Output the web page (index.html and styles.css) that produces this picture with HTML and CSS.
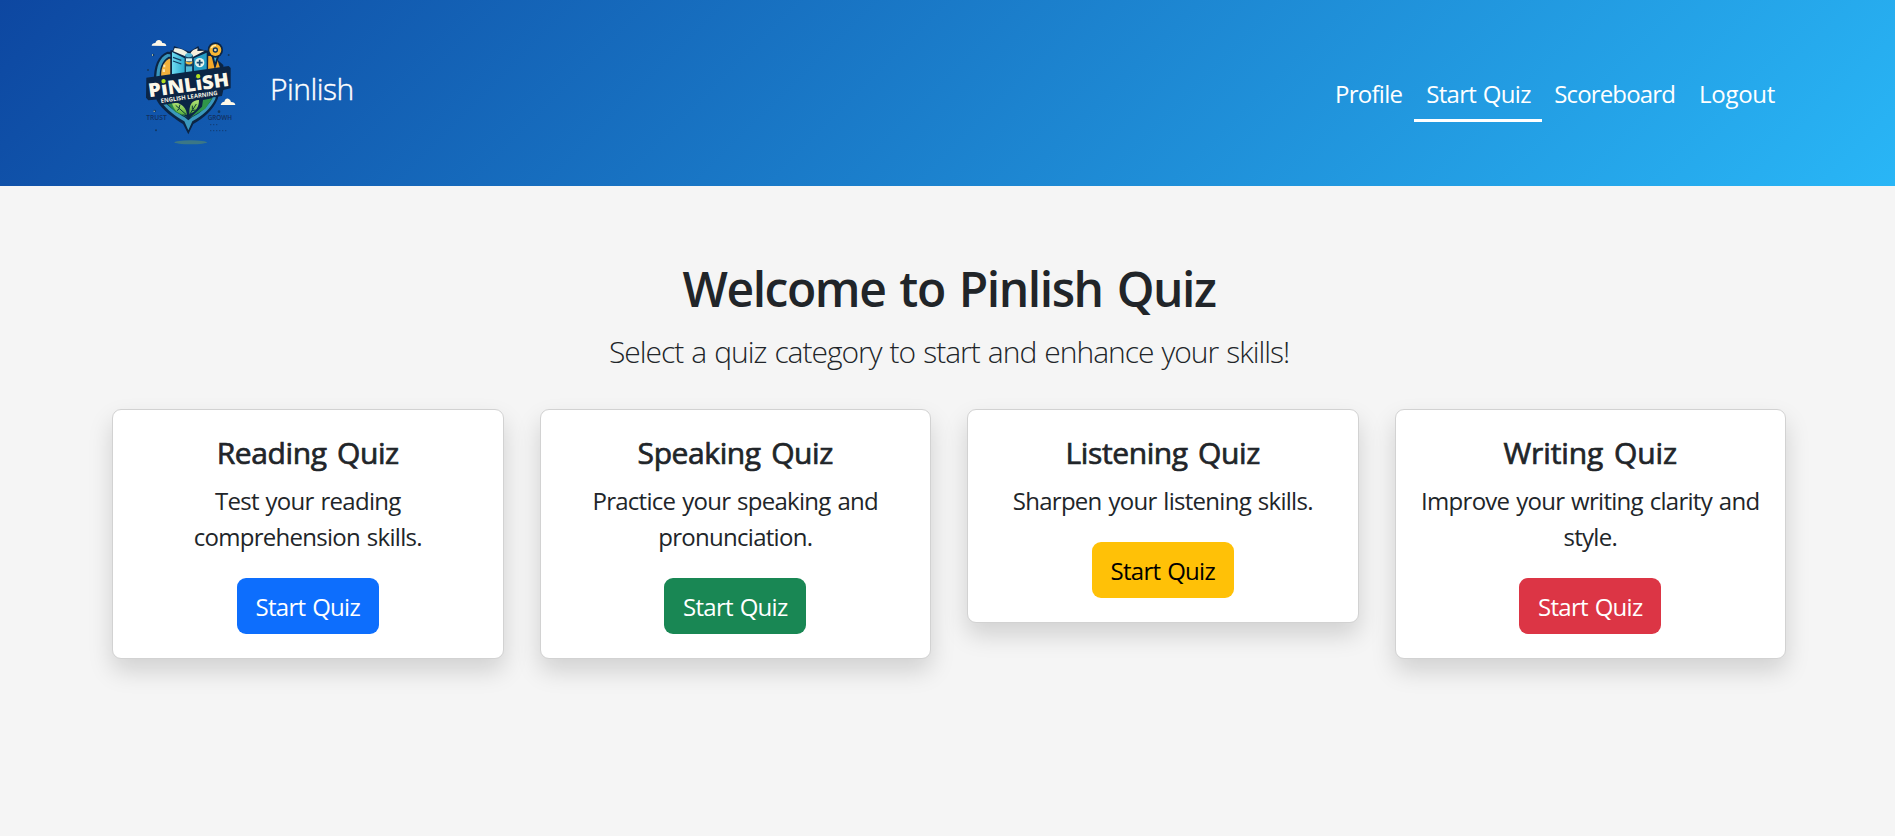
FILE: index.html
```html
<!DOCTYPE html>
<html lang="en">
<head>
<meta charset="utf-8">
<title>Pinlish Quiz</title>
<link rel="stylesheet" href="styles.css">
</head>
<body>
<header class="header">
  <a class="brand">
    <svg class="logo" viewBox="0 0 360 390" role="img" aria-label="Pinlish English Learning">
      <defs>
        <linearGradient id="cover" x1="0" x2="1"><stop offset="0" stop-color="#6fdcf2"/><stop offset="1" stop-color="#2ba9cf"/></linearGradient>
        <linearGradient id="leaf" x1="0" y1="0" x2="0" y2="1"><stop offset="0" stop-color="#b4e474"/><stop offset="1" stop-color="#58ad3d"/></linearGradient>
      </defs>
      <!-- shield ending in a pencil tip -->
      <path d="M112 80C84 90 70 125 72 168L80 226C96 256 134 282 159 297L175 328L190 297C220 281 250 254 263 222L280 160V120L240 84Z" fill="#0b2545"/>
      <path d="M112 87C89 97 78 125 79 165L94 231C109 254 139 275 163 289L175 316L187 289C215 274 244 249 256 222L268 150L240 100Z" fill="#3a98bd"/>
      <path d="M116 95C95 108 87 130 90 164L104 231C121 250 146 266 164 277L175 286L186 277C212 264 233 245 247 220L258 140L238 104Z" fill="#0b2545"/>
      <path d="M117 101C99 111 91 134 94 161L122 155V101Z" fill="#f2b13c"/>
      <path d="M232 93L258 92L271 132L232 140Z" fill="#f5a929"/>
      <path d="M100 119h6v8h-6zm-2 14h7v8h-7z" fill="#fbe6ae"/>
      <!-- open book and spine -->
      <path d="M121 76L129 76L132 63L178 80L205 63L208 71L224 76L235 77L234 147L121 154Z" fill="#0b2545"/>
      <path d="M134 69C151 70 169 76 176 88L166 94L130 79Z" fill="#eff1e3"/>
      <path d="M181 89C182 79 192 73 203 70L202 78L224 77L190 95Z" fill="#f8eedc"/>
      <path d="M126 81L164 100V150L126 157Z" fill="url(#cover)"/>
      <path d="M191 100L230 83V142L192 150Z" fill="#259dc5"/>
      <path d="M165 91H189V145H166Z" fill="#144365"/>
      <path d="M166 88Q176 80 187 88V94Q176 100 166 94Z" fill="#54b5d2"/>
      <path d="M168 100h18v9h-18z" fill="#d8f1ef"/>
      <path d="M167 109Q178 115 187 109V115Q178 122 167 115Z" fill="#f3b941"/>
      <path d="M168 124h18v20h-18z" fill="#53bad8"/>
      <path d="M129 97l25 9M129 108l25 9" stroke="#123e62" stroke-width="3.5"/>
      <circle cx="209" cy="113" r="14" fill="#e8f4ec"/>
      <path d="M209 104v18M200 113h18" stroke="#164b70" stroke-width="5"/>
      <!-- location pin -->
      <path d="M247 90L255 123L265 91" fill="#42b5d3" stroke="#0b2545" stroke-width="6"/>
      <circle cx="256" cy="75" r="23" fill="#0b2545"/>
      <circle cx="256" cy="75" r="18" fill="#f8b733"/>
      <path d="M244 69Q248 60 258 61" fill="none" stroke="#fff0b5" stroke-width="4"/>
      <circle cx="256" cy="75" r="8" fill="#0b3158"/>
      <circle cx="256" cy="75" r="4" fill="#e9d8ac"/>
      <!-- leaves -->
      <path d="M111 235L133 230L151 263L174 278L136 261Z" fill="#278949"/>
      <path d="M247 220L219 225L216 245L180 279L226 251Z" fill="#2f9649"/>
      <path d="M125 232C141 232 167 237 171 269C147 270 132 259 125 232Z" fill="url(#leaf)"/>
      <path d="M207 225C186 226 177 239 178 267C199 260 207 245 207 225Z" fill="url(#leaf)"/>
      <path d="M137 241L169 269M147 249l3-10M148 251l-7 6M178 270L199 237M187 253v-11M185 257l12-2" stroke="#0b3b38" stroke-width="3" fill="none"/>
      <!-- name banner -->
      <path d="M49 158L296 123L302 129V190L280 195L276 213L95 240L89 223L55 226L48 218Z" fill="#0b2545"/>
      <g transform="rotate(-8 175 180)">
        <text class="logo-name" x="54" y="200" textLength="244" lengthAdjust="spacingAndGlyphs">PiNLiSH</text>
        <circle cx="103" cy="159" r="9" fill="#0b2545"/>
        <circle cx="208" cy="159" r="9" fill="#0b2545"/>
        <circle cx="103" cy="158" r="6.5" fill="#b4df20"/>
        <circle cx="208" cy="158" r="6.5" fill="#b4df20"/>
        <text class="logo-sub" x="86" y="222" textLength="172" lengthAdjust="spacingAndGlyphs">ENGLISH LEARNING</text>
      </g>
      <text class="logo-word" x="49" y="286" textLength="61" lengthAdjust="spacingAndGlyphs">TRUST</text>
      <text class="logo-word" x="233" y="286" textLength="73" lengthAdjust="spacingAndGlyphs">GROWH</text>
      <!-- clouds, specks and ground shadow -->
      <path d="M65 62Q66 54 76 54Q79 44 88 45Q96 46 97 54Q108 53 109 63Z" fill="#fff8e7"/>
      <path d="M272 240Q274 231 283 230Q286 219 295 221Q302 223 303 231Q315 231 316 240Z" fill="#fff8e7"/>
      <g fill="#123863"><circle cx="69" cy="90" r="4"/><circle cx="54" cy="135" r="3"/><circle cx="296" cy="90" r="3"/><circle cx="74" cy="258" r="4"/><circle cx="267" cy="260" r="4"/><circle cx="78" cy="316" r="3"/></g>
      <path d="M66 88h3v4h-3zM71 257h3v4h-3z" fill="#c9d5af"/>
      <path d="M240 317h53M240 299h27" stroke="#123d74" stroke-width="3" stroke-dasharray="4 5"/>
      <ellipse cx="182" cy="352" rx="49" ry="6" fill="#3b7786"/>
    </svg>
    <span class="brand-name">Pinlish</span>
  </a>
  <nav class="nav">
    <a class="nav-link profile">Profile</a>
    <a class="nav-link active">Start Quiz</a>
    <a class="nav-link scoreboard">Scoreboard</a>
    <a class="nav-link logout">Logout</a>
  </nav>
</header>
<main class="main">
  <h1 class="title">Welcome to Pinlish Quiz</h1>
  <p class="lead">Select a quiz category to start and enhance your skills!</p>
  <div class="cards">
    <section class="card"><h2 class="card-title">Reading Quiz</h2><p class="card-text">Test your reading comprehension skills.</p><a class="btn blue">Start Quiz</a></section>
    <section class="card"><h2 class="card-title">Speaking Quiz</h2><p class="card-text">Practice your speaking and pronunciation.</p><a class="btn green">Start Quiz</a></section>
    <section class="card"><h2 class="card-title">Listening Quiz</h2><p class="card-text">Sharpen your listening skills.</p><a class="btn yellow">Start Quiz</a></section>
    <section class="card"><h2 class="card-title wide">Writing Quiz</h2><p class="card-text">Improve your writing clarity and style.</p><a class="btn red">Start Quiz</a></section>
  </div>
</main>
</body>
</html>
```
FILE: styles.css
```css
* { box-sizing: border-box; }
body {
  margin: 0;
  min-height: 100vh;
  background: #f5f5f5;
  color: #212529;
  font: 400 24px/36px "Open Sans", "Noto Sans", sans-serif;
  letter-spacing: -0.72px;
  word-spacing: 1.3px;
}
h1, h2, p { margin: 0; }
.header {
  height: 186px;
  padding: 0 108px 0 130px;
  display: flex;
  justify-content: space-between;
  align-items: center;
  background: linear-gradient(135deg, #0d47a1, #29b6f6);
  color: #fff;
}
.brand { display: flex; align-items: center; gap: 20px; }
.logo { display: block; width: 120px; height: 130px; margin-top: -6px; }
.logo-name { font: 800 57px "Open Sans", sans-serif; fill: #fbf8ea; letter-spacing: 0; }
.logo-sub { font: 700 18px "Open Sans", sans-serif; fill: #f6f5e9; letter-spacing: 0; word-spacing: 0; }
.logo-word { font: 600 19px "Open Sans", sans-serif; fill: #12305f; letter-spacing: 0; }
.brand-name { font-size: 30px; font-weight: 300; line-height: 45px; letter-spacing: -0.5px; margin-top: -9px; -webkit-text-stroke: 0.4px; }
.nav { display: flex; margin-top: 3px; }
.nav-link { padding: 9px 12px 7px; border-bottom: 3px solid transparent; }
.nav-link.active { width: 128px; border-color: #fff; white-space: nowrap; }
.nav-link.scoreboard { letter-spacing: -0.85px; }
.nav-link.logout { letter-spacing: -0.3px; }
.main { padding: 72px 109px 0 112px; text-align: center; }
.title { font-size: 48px; font-weight: 600; line-height: 58px; letter-spacing: -1.45px; word-spacing: 3px; padding-top: 2px; }
.lead { font-size: 30px; font-weight: 300; line-height: 45px; letter-spacing: -1.02px; word-spacing: 1.3px; margin: 11px 0 35px; }
.cards { display: grid; grid-template-columns: repeat(4, 1fr); gap: 36px; align-items: start; }
.card {
  padding: 25px 23px 24px;
  border: 1px solid #d2d2d2;
  border-radius: 9px;
  background: #fff;
  box-shadow: 0 12px 24px rgba(0, 0, 0, 0.15);
}
.card-title { font-size: 30px; font-weight: 400; line-height: 36px; letter-spacing: -0.4px; word-spacing: 3px; -webkit-text-stroke: 0.7px; margin-bottom: 12px; }
.card-title.wide { letter-spacing: -0.1px; }
.card-text { margin-bottom: 23px; }
.btn { display: block; width: 142px; height: 56px; margin: 0 auto; border-radius: 9px; line-height: 58px; color: #fff; }
.blue { background: #0d6efd; }
.green { background: #198754; }
.yellow { background: #ffc107; color: #000; }
.red { background: #dc3545; }
```
